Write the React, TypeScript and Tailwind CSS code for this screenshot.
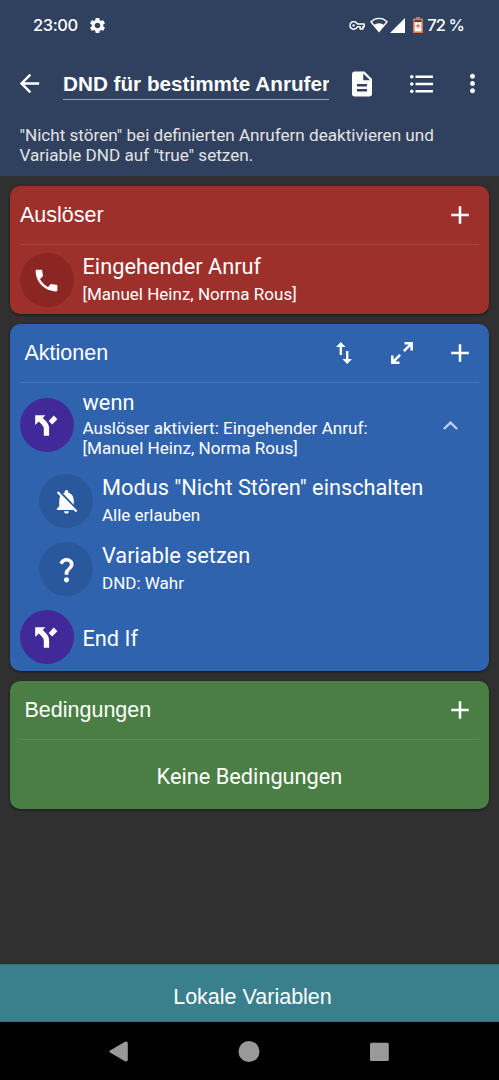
import type { ReactNode } from "react";
import {
  MdAdd,
  MdArrowBack,
  MdDescription,
  MdMoreVert,
  MdNotificationsOff,
  MdPhone,
  MdQuestionMark,
  MdSettings,
} from "react-icons/md";

const KeyIcon = () => (
  <svg className="h-[9px] w-[16px]" viewBox="0 0 16 9" fill="none" stroke="white" strokeWidth="1.5">
    <path d="M8.3 3H15.2V5.8H13.9V8H11.1V5.8H8.3A3.8 3.8 0 1 1 8.3 3Z" strokeLinejoin="round" />
    <circle cx="4.6" cy="4.4" r="1.2" fill="white" stroke="none" />
  </svg>
);

const WifiIcon = () => (
  <svg className="h-[16px] w-[18px]" viewBox="0 0 18 16">
    <path d="M1 4.7C5.7.3 12.3.3 17 4.7L9 14.4Z" fill="none" stroke="white" strokeWidth="1.4" />
    <path d="M3.8 8Q9 4.6 14.2 8L9 14.6Z" fill="white" />
  </svg>
);

const SignalIcon = () => (
  <svg className="h-[15px] w-[15px]" viewBox="0 0 15 15" fill="white">
    <path d="M15 0V15H0Z" />
  </svg>
);

const BatteryIcon = () => (
  <svg className="h-[16px] w-[10px]" viewBox="0 0 10 16">
    <path d="M3 0H7V1.4H10V16H0V1.4H3Z" fill="#e2704e" />
    <path d="M1.6 3.2H8.4V5.2H1.6Z" fill="#30415f" />
    <path d="M1.6 5.2H8.4V14.4H1.6Z" fill="white" />
    <path d="M4.4 6.4H5.6V8.2H7.4V9.4H5.6V11.4H4.4V9.4H2.6V8.2H4.4Z" fill="#e2704e" />
  </svg>
);

const ListIcon = () => (
  <svg className="h-[18px] w-[23px]" viewBox="0 0 23 18" fill="white">
    <circle cx="1.8" cy="1.8" r="1.8" />
    <circle cx="1.8" cy="9" r="1.8" />
    <circle cx="1.8" cy="16.2" r="1.8" />
    <path d="M5.5.6H23V3H5.5ZM5.5 7.8H23V10.2H5.5ZM5.5 15H23V17.4H5.5Z" />
  </svg>
);

const SwapIcon = () => (
  <svg className="h-[22px] w-[16px]" viewBox="0 0 16 22" fill="white">
    <path d="M4.8 0L9.6 5H6V13H3.6V5H0ZM11.2 22L6.4 17H10V9H12.4V17H16Z" />
  </svg>
);

const ExpandIcon = () => (
  <svg className="h-[22px] w-[22px]" viewBox="0 0 22 22" fill="none" stroke="white" strokeWidth="2.5">
    <path d="M13.5 1.3H20.7V8.5M20.7 1.3L12.9 9.1M8.5 20.7H1.3V13.5M1.3 20.7L9.1 12.9" />
  </svg>
);

const ForkIcon = () => (
  <svg className="h-[22px] w-[23px]" viewBox="0 0 23 22" fill="white">
    <path d="M.2 1.2H10.4L7.7 4L10.8 7Q14.1 10.2 14.1 14.5V21.7H8.8V15Q8.8 12.4 6.8 10.4L3.8 7.6L.2 11Z" />
    <path d="M18.8 1.6L22.4 5.2 17.2 10.4 13.7 6.9Z" />
  </svg>
);

const ChevronUp = () => (
  <svg className="mt-[9px] h-[9px] w-[15px]" viewBox="0 0 15 9" fill="none" stroke="#bfcfe8" strokeWidth="2.4">
    <path d="M.9 8L7.5 1.6L14.1 8" />
  </svg>
);

interface RowProps {
  icon: ReactNode;
  title: string;
  circle: string;
  children?: ReactNode;
  className?: string;
  textClass?: string;
}

const Row = ({ icon, title, circle, children, className = "", textClass = "" }: RowProps) => (
  <div className={`flex items-center ${className}`}>
    <div className={`flex size-[54px] shrink-0 items-center justify-center rounded-full ${circle}`}>
      {icon}
    </div>
    <div className={`ml-[9px] whitespace-nowrap ${textClass}`}>
      <div className="text-[21.75px] leading-[26px]">{title}</div>
      {children}
    </div>
  </div>
);

interface CardProps {
  title: string;
  color: string;
  titleClass?: string;
  actions?: ReactNode;
  children: ReactNode;
}

const Card = ({ title, color, titleClass = "pl-[14.5px]", actions, children }: CardProps) => (
  <section className={`flex flex-col rounded-[10px] shadow-[0_1px_3px_rgba(0,0,0,0.5)] ${color}`}>
    <div className={`flex h-[58px] shrink-0 items-center pr-[14px] ${titleClass}`}>
      <h2 className="flex-1 font-['Liberation_Sans',sans-serif] text-[21.5px]">{title}</h2>
      {actions}
      <MdAdd size={30} />
    </div>
    <div className="mx-[10px] h-px shrink-0 bg-white/10" />
    {children}
  </section>
);

const App = () => {
  return (
    <div className="flex h-[1080px] w-[499px] flex-col overflow-hidden bg-[#303030] font-['Roboto',sans-serif] text-white">
      <header className="h-[176px] shrink-0 bg-[#30415f]">
        <div className="flex h-[50px] items-center pr-[35px] pl-[33px] font-['Inter',sans-serif] text-[16.5px] font-medium tracking-[-0.4px]">
          <span>23:00</span>
          <MdSettings size={19} className="ml-[10px]" />
          <div className="ml-auto flex items-center">
            <KeyIcon />
            <div className="ml-[5px]"><WifiIcon /></div>
            <div className="ml-[2px]"><SignalIcon /></div>
            <div className="ml-[8px]"><BatteryIcon /></div>
            <span className="ml-[4px] tracking-[-0.9px]">72 %</span>
          </div>
        </div>
        <div className="flex h-[67px] items-center pl-[15px]">
          <MdArrowBack size={29} />
          <div className="ml-[19px] h-[33px] w-[266px] overflow-hidden border-b border-[#8e9ad0] font-['Liberation_Sans',sans-serif] text-[20.7px] leading-[34px] font-bold whitespace-nowrap">
            DND für bestimmte Anrufer
          </div>
          <MdDescription size={30} className="ml-[18px]" />
          <div className="ml-[33px]"><ListIcon /></div>
          <MdMoreVert size={29} className="ml-[25px]" />
        </div>
        <p className="mt-[8px] ml-[19.5px] text-[17.1px] leading-[20px] text-[#e3e3e3]">
          "Nicht stören" bei definierten Anrufern deaktivieren und
          <br />
          Variable DND auf "true" setzen.
        </p>
      </header>

      <main className="flex flex-1 flex-col gap-[10px] px-[10px] pt-[10px]">
        <Card title="Auslöser" color="h-[128px] bg-[#9e302c]" titleClass="pl-[10px]">
          <Row
            className="ml-[9.5px] mt-[8px]"
            icon={<MdPhone size={29} />}
            title="Eingehender Anruf"
            circle="bg-[#8c2622]"
            textClass="pb-[2px]"
          >
            <div className="mt-[4px] text-[17px] leading-[20px]">[Manuel Heinz, Norma Rous]</div>
          </Row>
        </Card>

        <Card
          title="Aktionen"
          color="h-[347px] bg-[#3063ad]"
          actions={
            <div className="mr-[32px] flex items-center gap-[39px]">
              <SwapIcon />
              <ExpandIcon />
            </div>
          }
        >
          <div className="flex items-center pr-[31px]">
            <Row
              className="ml-[9.5px] mt-[7px] flex-1"
              icon={<ForkIcon />}
              title="wenn"
              circle="bg-[#41299a]"
            >
              <div className="mt-[2px] pb-px text-[17.1px] leading-[20px]">
                Auslöser aktiviert: Eingehender Anruf:
                <br />
                [Manuel Heinz, Norma Rous]
              </div>
            </Row>
            <ChevronUp />
          </div>
          <Row
            className="mt-[15px] ml-[29px]"
            icon={<MdNotificationsOff size={29} />}
            title={'Modus "Nicht Stören" einschalten'}
            circle="bg-[#2a589d]"
            textClass="pb-[3px]"
          >
            <div className="mt-[4px] text-[17px] leading-[20px]">Alle erlauben</div>
          </Row>
          <Row
            className="mt-[14px] ml-[29px]"
            icon={<MdQuestionMark size={31} />}
            title="Variable setzen"
            circle="bg-[#2a589d]"
            textClass="pb-[3px]"
          >
            <div className="mt-[4px] text-[17px] leading-[20px]">DND: Wahr</div>
          </Row>
          <Row
            className="mt-[14px] ml-[9.5px]"
            icon={<ForkIcon />}
            title="End If"
            circle="bg-[#41299a]"
            textClass="pt-[4px]"
          />
        </Card>

        <Card title="Bedingungen" color="h-[128px] bg-[#4b7e44]">
          <div className="pt-[24px] text-center text-[21.75px] leading-[26px]">Keine Bedingungen</div>
        </Card>
      </main>

      <footer className="shrink-0">
        <div className="flex h-[58px] items-center justify-center border-y border-[#2e6d78] bg-[#3a808c] pt-[8px] pl-[6px] font-['Liberation_Sans',sans-serif] text-[21.5px]">
          Lokale Variablen
        </div>
        <div className="flex h-[58px] items-center justify-center bg-black">
          <svg className="h-[21px] w-[281px]" viewBox="0 0 281 21" fill="#999999">
            <path d="M1 9.5L16 .8Q18.8 0 18.8 2.5V18.5Q18.8 21 16 20.2L1 11.5Q-.5 10.5 1 9.5Z" />
            <circle cx="140" cy="10.5" r="10.5" />
            <rect x="261" y="1.7" width="18.8" height="18.3" rx="1.5" />
          </svg>
        </div>
      </footer>
    </div>
  );
};

export default App;
